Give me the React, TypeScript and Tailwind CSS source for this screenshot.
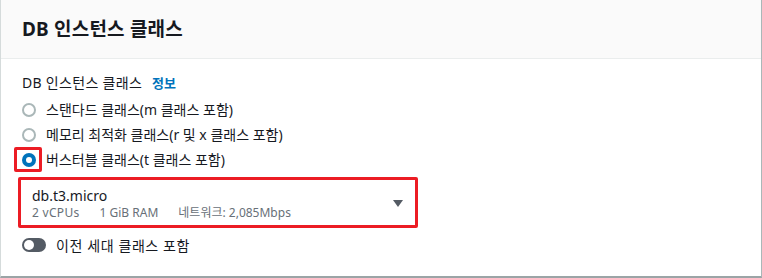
const font = "font-['Noto_Sans','Noto_Sans_CJK_KR',sans-serif]";

function Radio({ checked }: { checked?: boolean }) {
  if (checked) {
    return (
      <span className="w-[14px] h-[14px] rounded-full bg-[#0073bb] flex items-center justify-center shrink-0">
        <span className="w-[6px] h-[6px] rounded-full bg-white" />
      </span>
    );
  }
  return <span className="w-[14px] h-[14px] rounded-full border-2 border-[#aab7b8] bg-white shrink-0" />;
}

export default function App() {
  const options = [
    { label: "스탠다드 클래스(m 클래스 포함)" },
    { label: "메모리 최적화 클래스(r 및 x 클래스 포함)" },
    { label: "버스터블 클래스(t 클래스 포함)", checked: true },
  ];

  return (
    <div className={`w-[762px] h-[278px] bg-white text-[#16191f] ${font} border-l border-l-[#d5dbdb] border-r border-r-[#aab7b8] border-b-2 border-b-[#9ba4a6] flex flex-col`}>
      {/* header */}
      <div className="h-[59px] bg-[#fafafa] border-b border-[#eaeded] flex items-center pl-[21px] shrink-0">
        <h2 className="text-[19px] font-bold leading-[24px] tracking-[0.2px]">DB 인스턴스 클래스</h2>
      </div>

      {/* body */}
      <div className="flex flex-col pl-[21px] pt-[13px]">
        <div className="flex items-center h-[22px] text-[14px] leading-[22px]">
          <span className="tracking-[0.3px]">DB 인스턴스 클래스</span>
          <span className="ml-[10px] text-[#0073bb] font-semibold text-[13px]">정보</span>
        </div>

        <div className="flex flex-col mt-[3px]">
          {options.map((o) => (
            <div key={o.label} className="h-[25px] flex items-center gap-[10px] text-[14px]">
              <span className="relative flex items-center">
                <Radio checked={o.checked} />
                {o.checked && (
                  <span className="absolute left-[-8px] top-[-5.5px] w-[28px] h-[25px] border-[3px] border-[#ec1c24] rounded-[2px]" />
                )}
              </span>
              <span>{o.label}</span>
            </div>
          ))}
        </div>

        {/* select */}
        <div className="mt-[5px] ml-[-4px] w-[400px] h-[51px] border-[3px] border-[#ec1c24] rounded-[2px] flex items-start justify-between pl-[11px] pr-[12px]">
          <div className="flex flex-col pt-[7px]">
            <span className="text-[14px] leading-[18px]">db.t3.micro</span>
            <div className="flex gap-[20px] text-[12px] leading-[16px] text-[#687078]">
              <span className="tracking-[0.3px]">2 vCPUs</span>
              <span>1 GiB RAM</span>
              <span>네트워크: 2,085Mbps</span>
            </div>
          </div>
          <svg width="10" height="7" viewBox="0 0 10 7" className="mt-[20px]">
            <path d="M0 0 H10 L5 7 Z" fill="#545b64" />
          </svg>
        </div>

        {/* toggle */}
        <div className="mt-[5px] h-[24px] flex items-center gap-[10px] text-[14px]">
          <span className="w-[24px] h-[14px] rounded-full bg-[#545b64] flex items-center pl-[2px]">
            <span className="w-[10px] h-[10px] rounded-full bg-white" />
          </span>
          <span className="tracking-[0.6px]">이전 세대 클래스 포함</span>
        </div>
      </div>
    </div>
  );
}
